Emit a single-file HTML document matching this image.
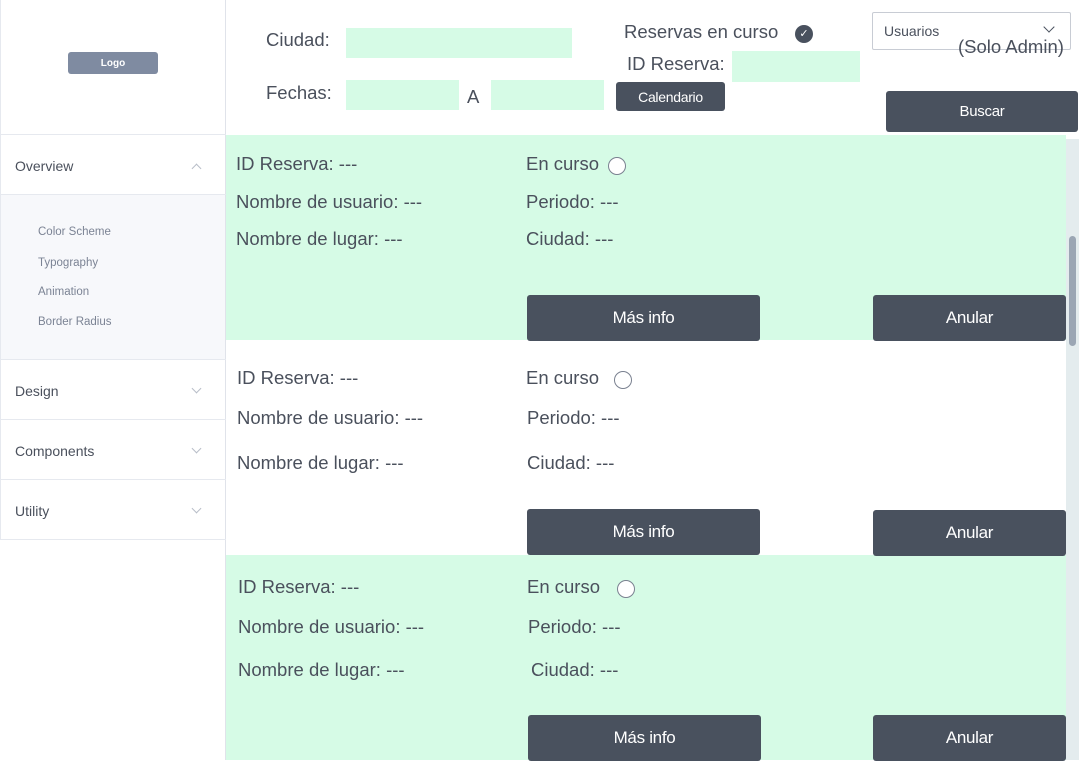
<!DOCTYPE html>
<html><head><style>
*{margin:0;padding:0;box-sizing:border-box}
body{width:1082px;height:760px;overflow:hidden;background:#fff;font-family:"Liberation Sans",sans-serif;color:#4a505c;position:relative}
.a{position:absolute;white-space:nowrap}
.in{position:absolute;background:#d6fbe6}
.btn{position:absolute;background:#49515e;color:#fff;border-radius:3px;display:flex;align-items:center;justify-content:center;font-size:17px;letter-spacing:-0.3px}
.t{position:absolute;font-size:18.5px;white-space:nowrap;color:#4a505c}
.nav{position:absolute;left:15px;font-size:14px;color:#4a505c}
.chev{position:absolute;left:193px;width:7px;height:7px;border-right:1px solid #b8bec8;border-bottom:1px solid #b8bec8}
.sub{position:absolute;left:38px;font-size:11.5px;color:#7b8394}
.hl{position:absolute;left:0;width:226px;height:1px;background:#e6e9ef}
</style></head><body>
<!-- sidebar -->
<div class="a" style="left:0;top:0;width:1px;height:540px;background:#e6e9ef"></div>
<div class="a" style="left:225px;top:0;width:1px;height:760px;background:#e0e3ea"></div>
<div class="a" style="left:68px;top:52px;width:90px;height:22px;background:#7f8ba1;border-radius:3px;color:#fff;font-size:10px;font-weight:bold;display:flex;align-items:center;justify-content:center">Logo</div>
<div class="hl" style="top:134px"></div>
<div class="nav" style="top:158px">Overview</div>
<div class="chev" style="top:165px;transform:rotate(-135deg)"></div>
<div class="hl" style="top:194px"></div>
<div class="a" style="left:1px;top:195px;width:224px;height:164px;background:#f7f8fb"></div>
<div class="sub" style="top:226px">Color Scheme</div>
<div class="sub" style="top:257px">Typography</div>
<div class="sub" style="top:286px">Animation</div>
<div class="sub" style="top:316px">Border Radius</div>
<div class="hl" style="top:359px"></div>
<div class="nav" style="top:383px">Design</div><div class="chev" style="top:385px;transform:rotate(45deg)"></div>
<div class="hl" style="top:419px"></div>
<div class="nav" style="top:443px">Components</div><div class="chev" style="top:445px;transform:rotate(45deg)"></div>
<div class="hl" style="top:479px"></div>
<div class="nav" style="top:503px">Utility</div><div class="chev" style="top:505px;transform:rotate(45deg)"></div>
<div class="hl" style="top:539px"></div>
<!-- header -->
<div class="t" style="left:266px;top:29px">Ciudad:</div>
<div class="in" style="left:346px;top:28px;width:226px;height:30px"></div>
<div class="t" style="left:266px;top:82px">Fechas:</div>
<div class="in" style="left:346px;top:80px;width:113px;height:30px"></div>
<div class="t" style="left:467px;top:86px">A</div>
<div class="in" style="left:491px;top:80px;width:113px;height:30px"></div>
<div class="btn" style="left:616px;top:82px;width:109px;height:29px;font-size:14px">Calendario</div>
<div class="t" style="left:624px;top:21px">Reservas en curso</div>
<div class="a" style="left:795px;top:25px;width:18px;height:18px;border-radius:50%;background:#49515e;color:#fff;font-size:11px;text-align:center;line-height:18px">✓</div>
<div class="t" style="left:627px;top:53px">ID Reserva:</div>
<div class="in" style="left:732px;top:51px;width:128px;height:31px"></div>
<div class="a" style="left:872px;top:12px;width:199px;height:38px;border:1px solid #c8ccd4;border-radius:2px"></div>
<div class="a" style="left:884px;top:23px;font-size:14px;color:#4a505c">Usuarios</div>
<div class="a" style="left:1045px;top:23px;width:8px;height:8px;border-right:1.5px solid #49515e;border-bottom:1.5px solid #49515e;transform:rotate(45deg)"></div>
<div class="t" style="left:958px;top:36px">(Solo Admin)</div>
<div class="btn" style="left:886px;top:91px;width:192px;height:41px;font-size:15px">Buscar</div>
<!-- cards -->
<div class="a" style="left:226px;top:135px;width:840px;height:205px;background:#d6fbe6"></div>
<div class="a" style="left:226px;top:555px;width:840px;height:205px;background:#d6fbe6"></div>
<div class="a" style="left:1066px;top:139px;width:13px;height:621px;background:#e4ecee"></div>
<div class="a" style="left:1069px;top:236px;width:7px;height:110px;background:#9ba6b4;border-radius:4px"></div>

<div class="t" style="left:236px;top:153px">ID Reserva: ---</div>
<div class="t" style="left:236px;top:191px">Nombre de usuario: ---</div>
<div class="t" style="left:236px;top:228px">Nombre de lugar: ---</div>
<div class="t" style="left:526px;top:153px">En curso</div>
<div class="a" style="left:608px;top:157px;width:18px;height:18px;border-radius:50%;border:1.5px solid #7a8190;background:#fff"></div>
<div class="t" style="left:526px;top:191px">Periodo: ---</div>
<div class="t" style="left:526px;top:228px">Ciudad: ---</div>
<div class="btn" style="left:527px;top:295px;width:233px;height:46px">Más info</div>
<div class="btn" style="left:873px;top:295px;width:193px;height:46px">Anular</div>

<div class="t" style="left:237px;top:367px">ID Reserva: ---</div>
<div class="t" style="left:237px;top:407px">Nombre de usuario: ---</div>
<div class="t" style="left:237px;top:452px">Nombre de lugar: ---</div>
<div class="t" style="left:526px;top:367px">En curso</div>
<div class="a" style="left:614px;top:371px;width:18px;height:18px;border-radius:50%;border:1.5px solid #7a8190;background:#fff"></div>
<div class="t" style="left:527px;top:407px">Periodo: ---</div>
<div class="t" style="left:527px;top:452px">Ciudad: ---</div>
<div class="btn" style="left:527px;top:509px;width:233px;height:46px">Más info</div>
<div class="btn" style="left:873px;top:510px;width:193px;height:46px">Anular</div>

<div class="t" style="left:238px;top:576px">ID Reserva: ---</div>
<div class="t" style="left:238px;top:616px">Nombre de usuario: ---</div>
<div class="t" style="left:238px;top:659px">Nombre de lugar: ---</div>
<div class="t" style="left:527px;top:576px">En curso</div>
<div class="a" style="left:617px;top:580px;width:18px;height:18px;border-radius:50%;border:1.5px solid #7a8190;background:#fff"></div>
<div class="t" style="left:528px;top:616px">Periodo: ---</div>
<div class="t" style="left:531px;top:659px">Ciudad: ---</div>
<div class="btn" style="left:528px;top:715px;width:233px;height:46px">Más info</div>
<div class="btn" style="left:873px;top:715px;width:193px;height:46px">Anular</div>
</body></html>
